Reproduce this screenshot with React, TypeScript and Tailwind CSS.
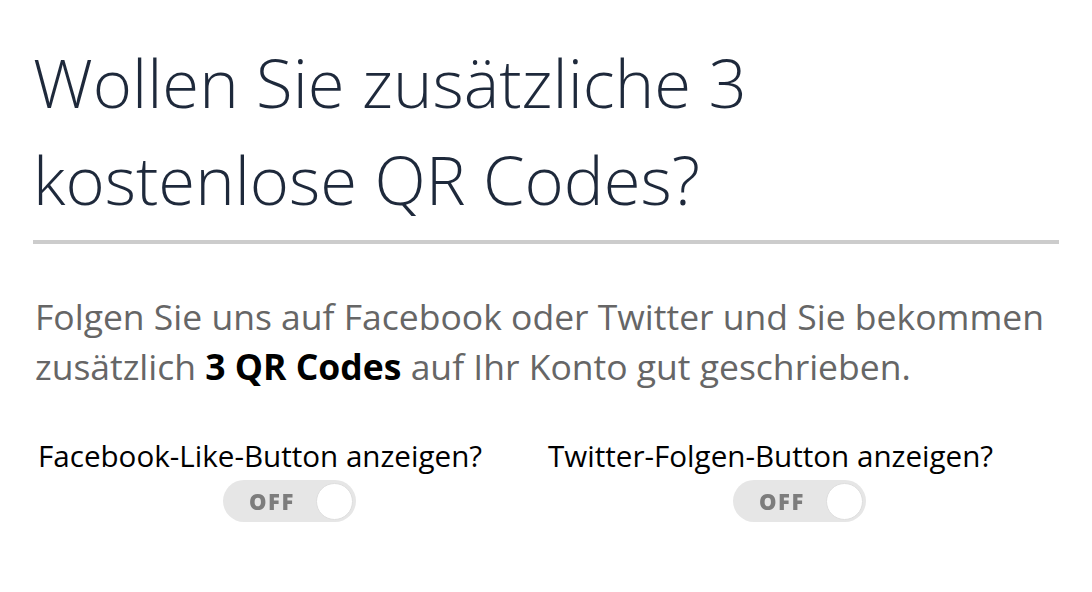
import React from 'react';

function Toggle() {
  return (
    <div className="flex h-[42px] w-[133px] items-center justify-between rounded-full bg-[#e6e6e6] pl-[26px] pr-[3px]">
      <span className="text-[22px] font-extrabold tracking-[1.5px] text-[#7d7d7d] blur-[0.7px]">OFF</span>
      <span className="h-[37px] w-[37px] rounded-full border border-[#dedede] bg-white" />
    </div>
  );
}

export default function App() {
  return (
    <div className="min-h-screen bg-white px-[33px] pt-[34px] font-['Open_Sans',sans-serif]">
      <h1 className="text-[67px] font-light leading-[97px] text-[#1e293b]">
        Wollen Sie zusätzliche 3<br />
        kostenlose QR Codes?
      </h1>
      <div className="mt-[12px] h-[4px] w-full bg-[#cccccc]" />
      <p className="mt-[47px] pl-[2px] text-[35.5px] leading-[50px] text-[#666666]">
        Folgen Sie uns auf Facebook oder Twitter und Sie bekommen zusätzlich{' '}
        <b className="font-bold text-black">3 QR Codes</b> auf Ihr Konto gut geschrieben.
      </p>
      <div className="mt-[46px] grid grid-cols-2">
        <div className="flex flex-col">
          <span className="pl-[5px] text-[29.6px] leading-[38px] text-black">Facebook-Like-Button anzeigen?</span>
          <div className="mt-[5px] flex justify-center">
            <Toggle />
          </div>
        </div>
        <div className="flex flex-col">
          <span className="pl-[2px] text-[29.6px] leading-[38px] text-black">Twitter-Folgen-Button anzeigen?</span>
          <div className="mt-[5px] flex justify-center pr-[6px]">
            <Toggle />
          </div>
        </div>
      </div>
    </div>
  );
}
